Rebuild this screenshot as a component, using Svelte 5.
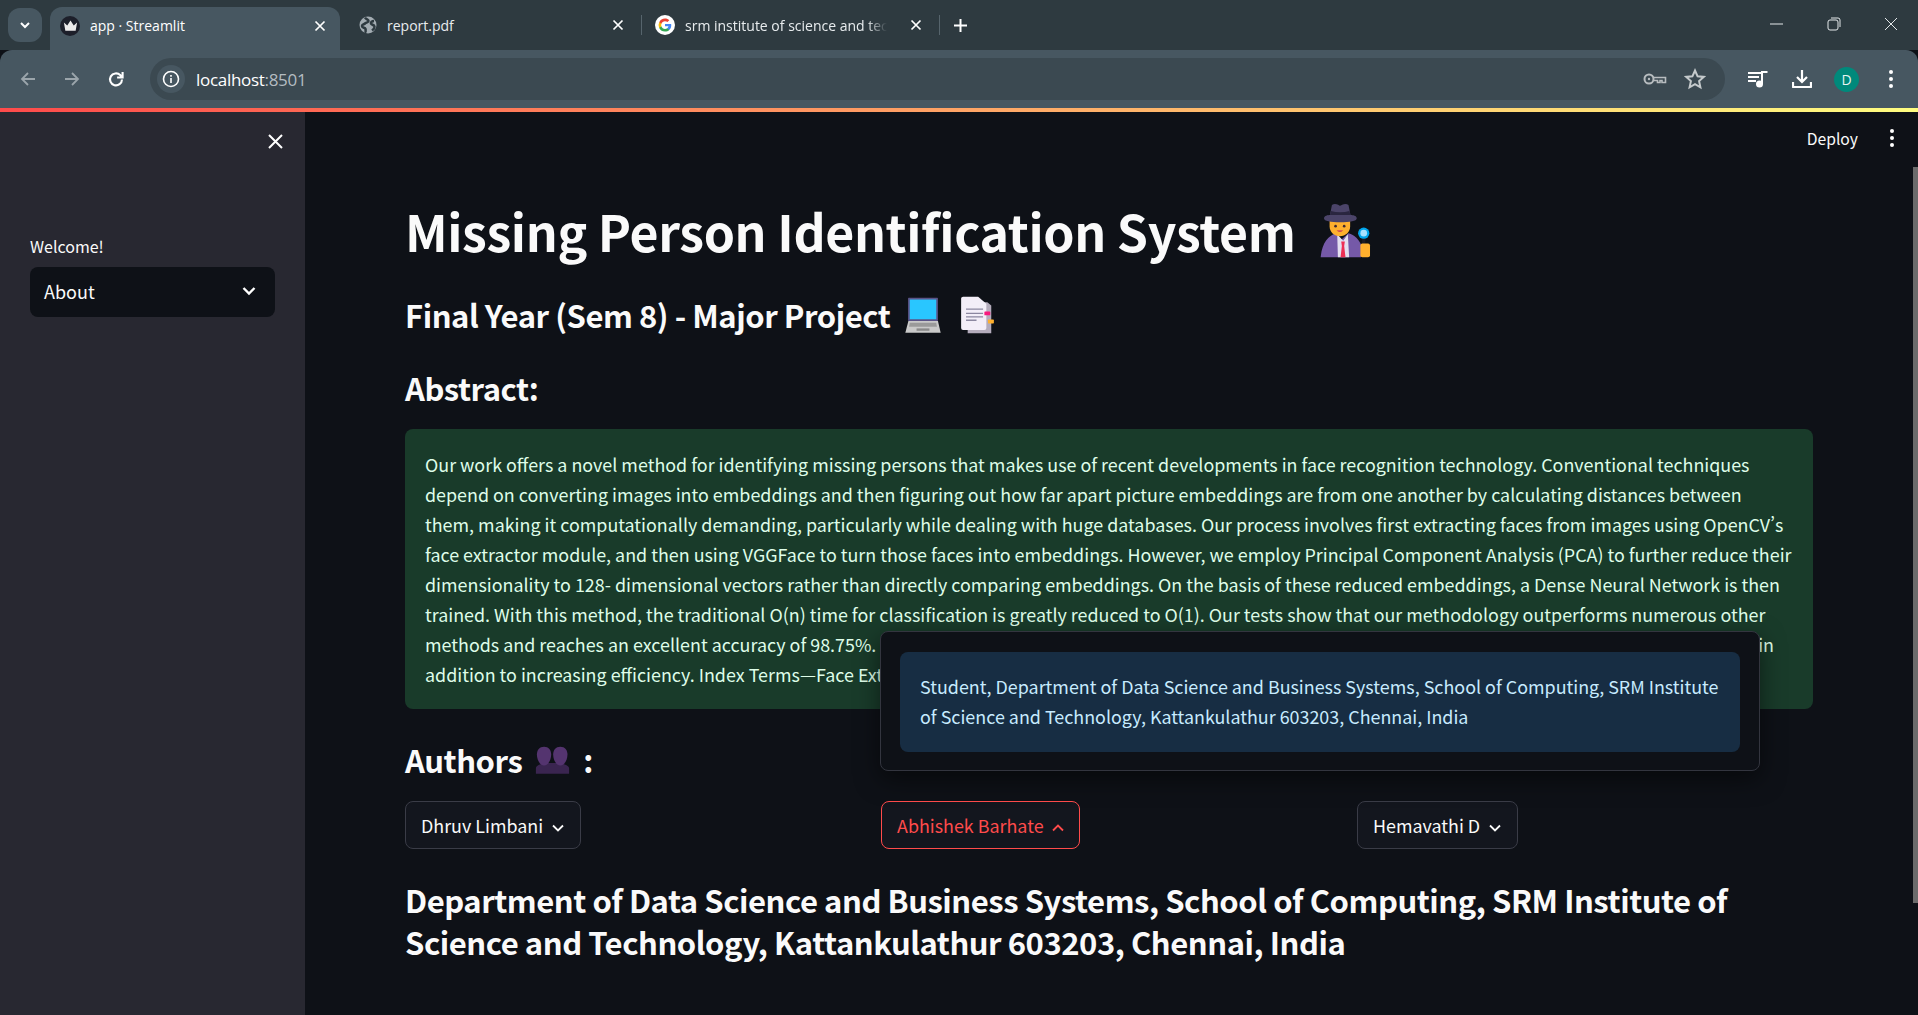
<script>
  const abstractLines = [
    'Our work offers a novel method for identifying missing persons that makes use of recent developments in face recognition technology. Conventional techniques',
    'depend on converting images into embeddings and then figuring out how far apart picture embeddings are from one another by calculating distances between',
    'them, making it computationally demanding, particularly while dealing with huge databases. Our process involves first extracting faces from images using OpenCV’s',
    'face extractor module, and then using VGGFace to turn those faces into embeddings. However, we employ Principal Component Analysis (PCA) to further reduce their',
    'dimensionality to 128- dimensional vectors rather than directly comparing embeddings. On the basis of these reduced embeddings, a Dense Neural Network is then',
    'trained. With this method, the traditional O(n) time for classification is greatly reduced to O(1). Our tests show that our methodology outperforms numerous other'
  ];
</script>

<div class="window">
  <header class="chrome">
    <div class="tabstrip">
      <button class="tab-search" aria-label="Search tabs">
        <svg width="12" height="12" viewBox="0 0 12 12"><path d="M2 4l4 4 4-4" fill="none" stroke="#fff" stroke-width="2" /></svg>
      </button>
      <div class="tab active">
        <span class="favicon crown">
          <svg width="15" height="12" viewBox="0 0 12 10"><path d="M0.500 2l2.800 2.600L6 0.500l2.700 4.100L11.500 2l-1.200 7H1.700z" fill="#eceaea" /></svg>
        </span>
        <span class="tab-title">app · Streamlit</span>
        <svg class="tab-x" width="12" height="12" viewBox="0 0 12 12"><path d="M1.500 1.500l9 9M10.500 1.500l-9 9" stroke="#fff" stroke-width="1.700" /></svg>
      </div>
      <div class="tab second">
        <svg class="favicon" width="18" height="18" viewBox="0 0 18 18">
          <circle cx="9" cy="9" r="8.500" fill="#a3acb2" />
          <path d="M6 1.500c1 2 3.500 2 3.500 3.500S7 6.500 6 7.500 3 8 3 10s3 1.500 3.500 3-.5 3 .5 4M15 5c-2 0-3.500 1-3 2.500s3 1 3.500 3-1.500 3-2.500 4" fill="none" stroke="#2e3a40" stroke-width="2.500" />
        </svg>
        <span class="tab-title">report.pdf</span>
        <svg class="tab-x" width="12" height="12" viewBox="0 0 12 12"><path d="M1.500 1.500l9 9M10.500 1.500l-9 9" stroke="#fff" stroke-width="1.700" /></svg>
      </div>
      <span class="tab-sep"></span>
      <div class="tab third">
        <svg class="favicon" width="20" height="20" viewBox="0 0 48 48">
          <circle cx="24" cy="24" r="24" fill="#fff" />
          <path d="M39 24.500c0-1-.1-2-.3-3H24v5.700h8.400a7.200 7.200 0 0 1-3.100 4.700v3.900h5c2.900-2.700 4.700-6.600 4.700-11.300z" fill="#4285f4" />
          <path d="M24 39.500c4.200 0 7.700-1.400 10.300-3.800l-5-3.900c-1.400.9-3.200 1.500-5.300 1.500-4 0-7.500-2.700-8.700-6.400h-5.200v4A15.500 15.500 0 0 0 24 39.500z" fill="#34a853" />
          <path d="M15.300 26.900a9.300 9.300 0 0 1 0-5.800v-4h-5.200a15.500 15.500 0 0 0 0 13.800z" fill="#fbbc05" />
          <path d="M24 14.700c2.300 0 4.300.8 5.900 2.300l4.400-4.400C31.700 10.100 28.200 8.500 24 8.500a15.500 15.500 0 0 0-13.900 8.600l5.200 4c1.200-3.700 4.700-6.400 8.700-6.400z" fill="#ea4335" />
        </svg>
        <span class="tab-title fade">srm institute of science and tech</span>
        <svg class="tab-x" width="12" height="12" viewBox="0 0 12 12"><path d="M1.500 1.500l9 9M10.500 1.500l-9 9" stroke="#fff" stroke-width="1.700" /></svg>
      </div>
      <span class="tab-sep"></span>
      <svg class="new-tab" width="13" height="13" viewBox="0 0 13 13"><path d="M6.500 0v13M0 6.500h13" stroke="#fff" stroke-width="2" /></svg>
      <div class="window-controls">
        <svg width="14" height="14" viewBox="0 0 14 14"><path d="M0 7h13" stroke="#e4e8ea" stroke-width="1" /></svg>
        <svg width="14" height="14" viewBox="0 0 14 14"><rect x="1" y="3" width="10" height="10" rx="2" fill="none" stroke="#e4e8ea" /><path d="M4 1h7a2 2 0 0 1 2 2v7" fill="none" stroke="#e4e8ea" /></svg>
        <svg width="14" height="14" viewBox="0 0 14 14"><path d="M1 1l12 12M13 1L1 13" stroke="#e4e8ea" stroke-width="1" /></svg>
      </div>
    </div>
    <div class="toolbar">
      <svg class="nav dim" width="18" height="18" viewBox="0 0 18 18"><path d="M16 9H3M9 3L3 9l6 6" fill="none" stroke="currentColor" stroke-width="1.800" /></svg>
      <svg class="nav dim" width="18" height="18" viewBox="0 0 18 18"><path d="M2 9h13M9 3l6 6-6 6" fill="none" stroke="currentColor" stroke-width="1.800" /></svg>
      <svg class="nav" width="18" height="18" viewBox="0 0 18 18"><path d="M15 9.500a6 6 0 1 1-1.800-4.400L15.400 7.500M15.600 2v5.500h-5.500" fill="none" stroke="currentColor" stroke-width="2.100" /></svg>
      <div class="omnibox">
        <span class="site-info">
          <svg width="18" height="18" viewBox="0 0 18 18"><circle cx="9" cy="9" r="7.500" fill="none" stroke="#fff" stroke-width="1.600" /><path d="M9 8v5M9 5v1.800" stroke="#fff" stroke-width="1.600" /></svg>
        </span>
        <span class="url">localhost<span class="port">:8501</span></span>
        <svg class="omni-icon key" width="24" height="14" viewBox="0 0 24 14"><circle cx="6" cy="7" r="4.500" fill="none" stroke="#b7bcbf" stroke-width="2" /><circle cx="6" cy="7" r="1.200" fill="#b7bcbf" /><path d="M10 5.500h12.500v5H19v-2h-2v2h-2.500v-2H10" fill="none" stroke="#b7bcbf" stroke-width="1.600" /></svg>
        <svg class="omni-icon" width="22" height="22" viewBox="0 0 22 22"><path d="M11 2.500l2.600 5.800 6.100.6-4.600 4.200 1.300 6.200L11 16.200l-5.400 3.100 1.300-6.200L2.300 8.900l6.100-.6z" fill="none" stroke="#c5cacc" stroke-width="2" /></svg>
      </div>
      <div class="toolbar-actions">
        <svg width="20" height="18" viewBox="0 0 20 18"><path d="M0 3h13M0 7h11M0 11h8" stroke="#fff" stroke-width="2" /><path d="M14 14V2h5.500" fill="none" stroke="#fff" stroke-width="2" /><circle cx="11.500" cy="14" r="3.500" fill="#fff" /></svg>
        <svg width="20" height="20" viewBox="0 0 20 20"><path d="M10 1v11M5 8l5 5 5-5" fill="none" stroke="#fff" stroke-width="2.200" /><path d="M1 13v5h18v-5" fill="none" stroke="#fff" stroke-width="2.200" stroke-linejoin="round" /></svg>
        <span class="avatar">D</span>
        <svg class="menu-dots" width="4" height="18" viewBox="0 0 4 18"><circle cx="2" cy="2" r="2" fill="#fff" /><circle cx="2" cy="9" r="2" fill="#fff" /><circle cx="2" cy="16" r="2" fill="#fff" /></svg>
      </div>
    </div>
  </header>
  <div class="decoration"></div>

  <div class="app">
    <aside class="sidebar">
      <div class="sidebar-close">
        <svg width="15" height="15" viewBox="0 0 15 15"><path d="M1 1l13 13M14 1L1 14" stroke="#fff" stroke-width="2" /></svg>
      </div>
      <label class="select-label" for="nav-select">Welcome!</label>
      <div class="select" id="nav-select">
        <span>About</span>
        <svg width="14" height="10" viewBox="0 0 14 10"><path d="M1.500 2l5.500 5.500L12.500 2" fill="none" stroke="#fff" stroke-width="2.400" /></svg>
      </div>
    </aside>

    <main class="main">
      <div class="topbar">
        <span class="deploy">Deploy</span>
        <svg width="4" height="18" viewBox="0 0 4 18"><circle cx="2" cy="2" r="2" fill="#fff" /><circle cx="2" cy="9" r="2" fill="#fff" /><circle cx="2" cy="16" r="2" fill="#fff" /></svg>
      </div>

      <div class="content">
        <h1>
          Missing Person Identification System
          <svg width="53" height="55" viewBox="26 14 160 166">
            <path d="M28 178c4-43 22-66 47-73l15 20 22-20c18 5 33 20 38 35v38z" fill="#7559a8" />
            <path d="M78 108l18 20 14-20 4 70H80z" fill="#e4dff0" />
            <path d="M90 130h11l-2 14 4 34H88l4-34z" fill="#ee2f55" />
            <path d="M55 62h62v22c0 18-14 30-31 30S55 102 55 84z" fill="#ffb02e" />
            <circle cx="73" cy="84" r="4" fill="#402a32" />
            <circle cx="99" cy="84" r="4" fill="#402a32" />
            <path d="M76 97c6 5 14 5 20 0z" fill="#bb1d5a" />
            <path d="M38 60c0-8 12-10 18-10l6-30c10-8 23 2 24 2 4 0 16-10 26-2l6 30c7 0 19 2 19 10 0 9-21 12-50 12S38 69 38 60z" fill="#4b4469" />
            <path d="M59 38c18 5 38 5 56 0l3 12H56z" fill="#2a2640" />
            <path d="M153 118h10v24h-10z" fill="#1c1c24" />
            <circle cx="158" cy="105" r="17" fill="#00a6ed" />
            <circle cx="158" cy="105" r="10" fill="#a8e2ff" />
            <rect x="148" y="136" width="29" height="42" rx="6" fill="#ffb02e" />
          </svg>
        </h1>
        <h3 class="subtitle">
          Final Year (Sem 8) - Major Project
          <svg class="laptop" width="36" height="37" viewBox="28 20 106 108">
            <rect x="37" y="22" width="88" height="68" rx="2" fill="#5a5488" />
            <rect x="42" y="27" width="78" height="58" fill="#29c6ff" />
            <path d="M38 90h87l8 35H29z" fill="#c9c9c9" />
            <path d="M42 95h78l2 12H40z" fill="#9a9a9a" />
            <path d="M62 112h38v7H62z" fill="#8a8a8a" />
          </svg>
          <svg width="35" height="38" viewBox="190 16 106 116">
            <path d="M213 35h60l12 10v85h-72z" fill="#b4acbc" />
            <path d="M193 24a6 6 0 0 1 6-6h46l25 22v74a6 6 0 0 1-6 6h-65a6 6 0 0 1-6-6z" fill="#f3eef8" />
            <path d="M208 56h52M208 69h52M208 80h52M208 90h32" stroke="#8c87a0" stroke-width="4" />
            <rect x="264" y="63" width="18" height="12" rx="2" fill="#f8197e" />
            <rect x="275" y="88" width="18" height="12" rx="2" fill="#ffb02e" />
          </svg>
        </h3>
        <h3 class="abstract-title">Abstract:</h3>

        <div class="alert success">
          {#each abstractLines as line}
            <div class="line">{line}</div>
          {/each}
          <div class="line split"><span>methods and reaches an excellent accuracy of 98.75%.</span><span>in</span></div>
          <div class="line">addition to increasing efficiency. Index Terms—Face Extraction</div>
        </div>

        <h3 class="authors">
          Authors
          <svg width="35" height="28" viewBox="46 30 106 86">
            <path d="M48 115V98c0-8 14-12 24-16h52c10 4 26 8 26 16v17z" fill="#3a2550" />
            <path d="M73 32c14 0 22 10 22 24 0 14-8 34-22 34S51 70 51 56c0-14 8-24 22-24z" fill="#54346f" />
            <path d="M123 32c14 0 22 10 22 24 0 14-8 34-22 34s-22-20-22-34c0-14 8-24 22-24z" fill="#54346f" />
          </svg>
          :
        </h3>

        <div class="columns">
          <div><button class="popover-btn">Dhruv Limbani <svg width="14" height="10" viewBox="0 0 14 10"><path d="M2 2.500l5 5 5-5" fill="none" stroke="currentColor" stroke-width="1.800" /></svg></button></div>
          <div class="open">
            <button class="popover-btn active">Abhishek Barhate <svg width="14" height="10" viewBox="0 0 14 10"><path d="M2 7.500l5-5 5 5" fill="none" stroke="currentColor" stroke-width="1.800" /></svg></button>
            <div class="popover">
              <div class="alert info">Student, Department of Data Science and Business Systems, School of Computing, SRM Institute of Science and Technology, Kattankulathur 603203, Chennai, India</div>
            </div>
          </div>
          <div><button class="popover-btn">Hemavathi D <svg width="14" height="10" viewBox="0 0 14 10"><path d="M2 2.500l5 5 5-5" fill="none" stroke="currentColor" stroke-width="1.800" /></svg></button></div>
        </div>

        <h3 class="dept">Department of Data Science and Business Systems, School of Computing, SRM Institute of Science and Technology, Kattankulathur 603203, Chennai, India</h3>
      </div>
      <div class="scrollbar"></div>
    </main>
  </div>
</div>

<style>
  :global(body) {
    margin: 0;
    background: #0e1117;
    font-family: "Noto Sans CJK SC", "Noto Sans", sans-serif;
    font-feature-settings: "pwid";
    color: #fafafa;
  }

  .window {
    display: flex;
    flex-direction: column;
    height: 1015px;
    overflow: hidden;
  }

  /* browser chrome */
  .chrome {
    font-family: "Open Sans", "Noto Sans", sans-serif;
    flex: none;
  }

  .tabstrip {
    display: flex;
    align-items: flex-end;
    height: 50px;
    background: #2e3a40;
    padding-left: 8px;
    box-sizing: border-box;
    color: #e8ecee;
    font-size: 14px;
  }

  .tab-search {
    align-self: flex-start;
    margin-top: 8px;
    width: 34px;
    height: 34px;
    border: 0;
    padding: 0;
    border-radius: 12px;
    background: #475761;
    display: flex;
    align-items: center;
    justify-content: center;
  }

  .tab {
    display: flex;
    align-items: center;
    height: 36px;
    margin-bottom: 7px;
  }

  .tab.active {
    width: 290px;
    height: 43px;
    box-sizing: border-box;
    margin: 0 0 0 8px;
    padding: 0 14px 6px 10px;
    gap: 10px;
    background: #475761;
    border-radius: 12px 12px 0 0;
    color: #fff;
  }

  .tab.second {
    width: 301px;
    box-sizing: border-box;
    padding: 0 17px 0 19px;
    gap: 10px;
  }

  .tab.third {
    width: 297px;
    box-sizing: border-box;
    padding: 0 17px 0 13px;
    gap: 10px;
  }

  .favicon {
    flex: none;
  }

  .crown {
    width: 20px;
    height: 20px;
    border-radius: 50%;
    background: #1d1f2a;
    display: flex;
    align-items: center;
    justify-content: center;
  }

  .tab-title {
    flex: 1;
    white-space: nowrap;
    overflow: hidden;
  }

  .fade {
    margin-right: 10px;
    -webkit-mask-image: linear-gradient(90deg, #000 90%, transparent);
    mask-image: linear-gradient(90deg, #000 90%, transparent);
  }

  .tab-x {
    flex: none;
    margin-left: 3px;
  }

  .tab-sep {
    width: 1px;
    height: 20px;
    margin-bottom: 15px;
    background: #56646c;
  }

  .new-tab {
    margin: 0 0 18px 14px;
  }

  .window-controls {
    margin-left: auto;
    align-self: flex-start;
    margin-top: 17px;
    margin-right: 20px;
    display: flex;
    gap: 43px;
  }

  .toolbar {
    display: flex;
    align-items: center;
    height: 58px;
    background: #475761;
    border-radius: 12px 12px 0 0;
    box-sizing: border-box;
    padding-left: 19px;
    gap: 26px;
    color: #fff;
  }

  .nav {
    flex: none;
  }

  .nav.dim {
    color: #9ba5ab;
  }

  .omnibox {
    display: flex;
    align-items: center;
    width: 1575px;
    height: 42px;
    margin-left: -1px;
    border-radius: 21px;
    background: #3b4951;
    box-sizing: border-box;
    padding: 0 19px 0 7px;
  }

  .site-info {
    width: 28px;
    height: 28px;
    border-radius: 50%;
    background: #475761;
    display: flex;
    align-items: center;
    justify-content: center;
  }

  .url {
    margin-left: 11px;
    font-size: 17px;
    color: #fff;
    letter-spacing: -0.3px;
    flex: 1;
  }

  .port {
    color: #b4bcc1;
  }

  .omni-icon {
    flex: none;
  }

  .key {
    margin-right: 17px;
  }

  .toolbar-actions {
    display: flex;
    align-items: center;
    margin-left: -3px;
    gap: 24px;
  }

  .avatar {
    width: 25px;
    height: 25px;
    margin-left: -2px;
    border-radius: 50%;
    background: #00897b;
    font-size: 14px;
    line-height: 25px;
    text-align: center;
    color: #e8f4f2;
  }

  .menu-dots {
    margin-left: 6px;
  }

  .decoration {
    flex: none;
    height: 4px;
    background: linear-gradient(90deg, #ff4b4b, #fffd80);
  }

  /* streamlit app */
  .app {
    flex: 1;
    display: flex;
    min-height: 0;
  }

  .sidebar {
    flex: none;
    width: 305px;
    box-sizing: border-box;
    background: #282831;
    padding: 22px 30px 0;
  }

  .sidebar-close {
    display: flex;
    justify-content: flex-end;
    height: 15px;
    margin-bottom: 86px;
    margin-right: -8px;
  }

  .select-label {
    display: block;
    font-size: 16px;
    line-height: 22px;
    margin-bottom: 10px;
  }

  .select {
    display: flex;
    align-items: center;
    justify-content: space-between;
    height: 50px;
    box-sizing: border-box;
    border-radius: 8px;
    background: #0e1117;
    padding: 0 19px 2px 14px;
    font-size: 18px;
  }

  .main {
    flex: 1;
    position: relative;
    min-width: 0;
    background: #0e1117;
  }

  .topbar {
    display: flex;
    justify-content: flex-end;
    align-items: center;
    height: 52px;
    padding-right: 24px;
    gap: 32px;
    font-size: 15.7px;
    box-sizing: border-box;
  }

  .content {
    padding: 0 105px 0 100px;
  }

  h1 {
    margin: 30px 0 0;
    font-size: 50px;
    line-height: 72px;
    font-weight: 700;
    letter-spacing: -0.37px;
    display: flex;
    align-items: center;
    gap: 25px;
  }

  h3 {
    margin: 0;
    font-size: 31px;
    line-height: 42px;
    font-weight: 700;
    letter-spacing: -0.45px;
    display: flex;
    align-items: center;
    gap: 13px;
  }

  .subtitle {
    margin-top: 28px;
    gap: 15px;
  }

  .laptop {
    margin-right: 4px;
  }

  .abstract-title {
    margin-top: 31px;
  }

  .alert {
    box-sizing: border-box;
    border-radius: 8px;
    padding: 20px;
    font-size: 17.9px;
    line-height: 30px;
  }

  .success {
    margin-top: 20px;
    background: #193b2a;
    color: #dffde9;
  }

  .line {
    white-space: nowrap;
  }

  .split {
    display: flex;
    justify-content: space-between;
    padding-right: 19px;
  }

  .authors {
    margin-top: 30px;
  }

  .columns {
    display: grid;
    grid-template-columns: repeat(3, 1fr);
    gap: 20px;
    margin-top: 20px;
  }

  .open {
    position: relative;
  }

  .popover-btn {
    display: inline-flex;
    align-items: center;
    gap: 8px;
    height: 48px;
    padding: 0 15px;
    border: 1px solid #3a3c47;
    border-radius: 8px;
    background: #13161e;
    color: #fafafa;
    font: inherit;
    font-size: 17.9px;
  }

  .popover-btn svg {
    margin-top: 5px;
  }

  .popover-btn.active {
    border-color: #ff4b4b;
    color: #ff4b4b;
    padding-right: 14px;
    gap: 7px;
  }

  .popover {
    position: absolute;
    left: -1px;
    top: -170px;
    width: 880px;
    height: 140px;
    box-sizing: border-box;
    padding: 20px 19px;
    background: #0e1117;
    border: 1px solid #33353f;
    border-radius: 8px;
    box-shadow: 0 8px 24px rgba(0, 0, 0, 0.5);
  }

  .info {
    height: 100px;
    padding-top: 19px;
    padding-right: 14px;
    background: #172d43;
    color: #c7ebff;
  }

  .dept {
    display: block;
    margin-top: 30px;
  }

  .scrollbar {
    position: absolute;
    right: 0;
    top: 55px;
    width: 5px;
    height: 736px;
    background: #6b6b6b;
  }
</style>
